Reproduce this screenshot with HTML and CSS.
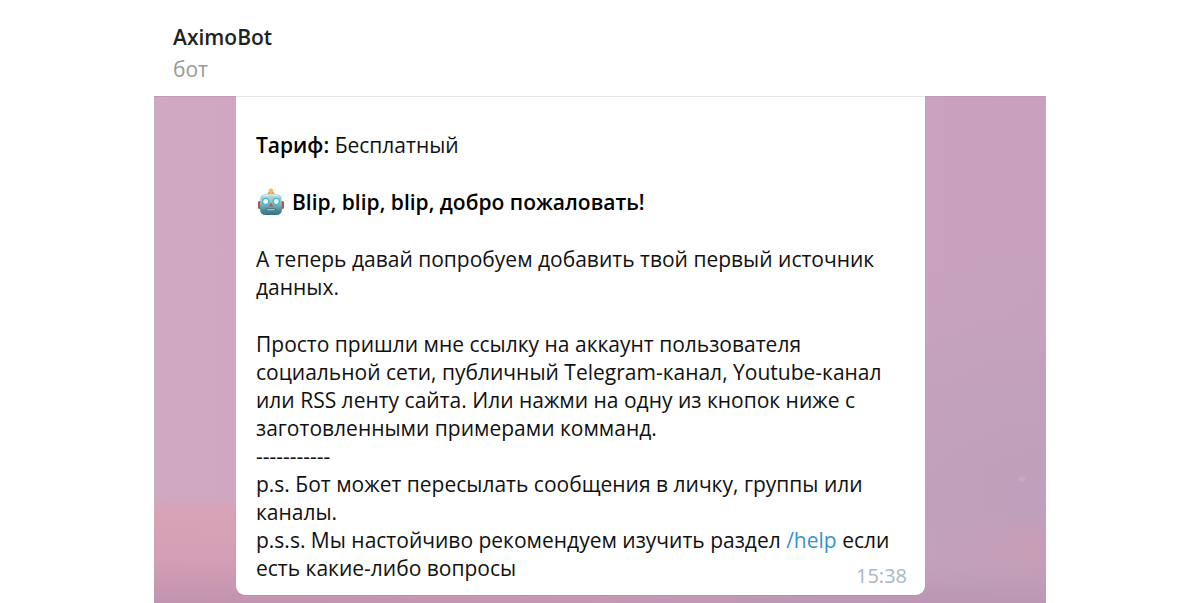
FILE: index.html
```html
<!DOCTYPE html>
<html lang="ru">
<head>
<meta charset="utf-8">
<meta name="viewport" content="width=device-width, initial-scale=1">
<title>AximoBot</title>
<link rel="stylesheet" href="styles.css">
</head>
<body>
<main class="chat">
  <header class="chat-header">
    <h1 class="chat-name">AximoBot</h1>
    <p class="chat-status">бот</p>
  </header>
  <section class="chat-body">
    <article class="message">
      <p><b>Тариф:</b> Бесплатный</p>
      <p class="greeting"><svg class="robot" viewBox="0 0 28 28" role="img" aria-label="Робот">
        <defs>
          <linearGradient id="face" x1="0" y1="0" x2="0" y2="1">
            <stop offset="0" stop-color="#c3dcdb"/>
            <stop offset=".45" stop-color="#8cc0c4"/>
            <stop offset=".75" stop-color="#4c929b"/>
            <stop offset="1" stop-color="#2f7280"/>
          </linearGradient>
        </defs>
        <rect x="1" y="13" width="4" height="8" rx="1.5" fill="#b0505a"/>
        <rect x="23" y="13" width="4" height="8" rx="1.5" fill="#b0505a"/>
        <path d="M10.500 6.500Q10.500 3.500 14 3.500t3.500 3z" fill="#e3823f"/>
        <circle cx="14" cy="2.800" r="2.400" fill="#f7c04c"/>
        <path d="M6 6.500Q14 4.500 22 6.500Q24.500 7 24.700 10L25 21Q25 27 19 27H9Q3 27 3 21L3.300 10Q3.500 7 6 6.500z" fill="url(#face)"/>
        <path d="M6 8Q14 6 22 8" fill="none" stroke="#dceceb" stroke-width="1"/>
        <circle cx="8.700" cy="13.500" r="3.100" fill="#f1ffff" stroke="#45b9cf" stroke-width="1.300"/>
        <circle cx="19.300" cy="13.500" r="3.100" fill="#f1ffff" stroke="#45b9cf" stroke-width="1.300"/>
        <path d="M14 14.500l2.600 4h-5.200z" fill="#d05353"/>
        <rect x="9" y="20.500" width="10" height="2.600" rx="1.300" fill="#3d6875"/>
        <path d="M10 21.800h8" stroke="#cbdfe0" stroke-width="1"/>
      </svg><b>Blip, blip, blip, добро пожаловать!</b></p>
      <p>А теперь давай попробуем добавить твой первый источник<br>данных.</p>
      <p>Просто пришли мне ссылку на аккаунт пользователя<br>социальной сети, публичный Telegram-канал, Youtube-канал<br>или RSS ленту сайта. Или нажми на одну из кнопок ниже с<br>заготовленными примерами комманд.<br>-----------<br>p.s. Бот может пересылать сообщения в личку, группы или<br>каналы.<br>p.s.s. Мы настойчиво рекомендуем изучить раздел <a href="#help">/help</a> если<br>есть какие-либо вопросы</p>
      <time class="message-time" datetime="15:38">15:38</time>
    </article>
  </section>
</main>
</body>
</html>
```
FILE: styles.css
```css
* {
  box-sizing: border-box;
}

body {
  margin: 0;
  background: #fff;
  color: #111;
  font-family: "Open Sans", "Noto Sans", sans-serif;
  font-size: 21px;
  line-height: 28px;
}

p,
h1 {
  margin: 0;
}

b {
  color: #000;
  font-weight: 600;
}

a {
  color: #3593d0;
  text-decoration: none;
}

.chat {
  display: flex;
  flex-direction: column;
  max-width: 892px;
  min-height: 100vh;
  margin: 0 auto;
}

.chat-header {
  padding: 22px 19px 13px;
}

.chat-name {
  margin-bottom: 3px;
  color: #222;
  font-size: 21px;
  font-weight: 600;
  line-height: 30px;
}

.chat-status {
  color: #999;
}

.chat-body {
  flex: 1;
  padding: 0 121px 8px 82px;
  border-top: 1px solid #c09ab5;
  background:
    radial-gradient(ellipse 5px 4px at 868px 382px, #d5aacb, #d5aacb00),
    radial-gradient(ellipse 120px 40px at 100% 89%, #d09ab290, #d09ab200),
    linear-gradient(#b88eac00 92%, #b88eac90),
    radial-gradient(ellipse 500px 106px at 0 100%, #d09ab2, #d8a2b7 88%, #d8a2b700),
    radial-gradient(ellipse 420px 240px at 100% 80%, #bda0bb, #bda0bb00),
    linear-gradient(to right, #d0a8c1, #c8a2bd);
}

.message {
  position: relative;
  display: flex;
  flex-direction: column;
  gap: 29px;
  margin-top: -1px;
  padding: 34px 20px 13px;
  border-top: 1px solid #e5e5e5;
  border-radius: 0 0 9px 9px;
  background: #fff;
  box-shadow: 0 1px 1px #a98da980;
}

.greeting {
  display: flex;
  align-items: center;
  gap: 7px;
}

.robot {
  width: 28px;
  height: 28px;
  margin-left: 1px;
}

.message-time {
  position: absolute;
  right: 18px;
  bottom: 5px;
  color: #a9b6c2;
  font-size: 20px;
}
```
